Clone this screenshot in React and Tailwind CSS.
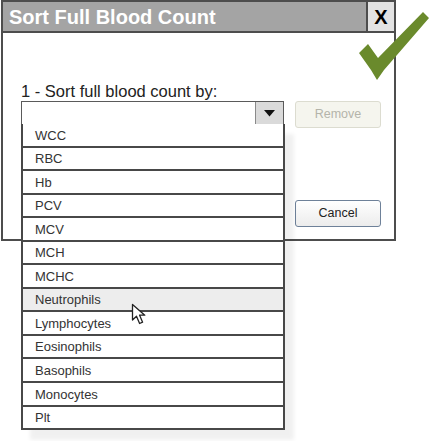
const ITEMS = ['WCC', 'RBC', 'Hb', 'PCV', 'MCV', 'MCH', 'MCHC', 'Neutrophils', 'Lymphocytes', 'Eosinophils', 'Basophils', 'Monocytes', 'Plt']

function Check() {
  return (
    <svg className="absolute left-[358px] top-[10px]" width="71" height="72" viewBox="0 0 71 72">
      <path d="M1 43 L10 34 L20 48 L65 2 L71 8 L26 60 L19 70 L13 60 Z" fill="#6a8a2c" />
    </svg>
  )
}

function Cursor() {
  return (
    <svg className="absolute left-[131px] top-[303px]" width="16" height="24" viewBox="0 0 16 24">
      <path d="M1.5 1.5 L1.5 17 L5.5 13.2 L8.6 20.5 L11.6 19.2 L8.6 12.2 L13.8 12.2 Z" fill="#fff" stroke="#222" strokeWidth="1.3" strokeLinejoin="round" />
    </svg>
  )
}

export default function App() {
  return (
    <div className="relative w-[429px] h-[441px] bg-white overflow-hidden" style={{ fontFamily: '"Liberation Sans", Arial, sans-serif' }}>
      <div className="ml-[1px] w-[395px] h-[241px] border-2 border-[#4d4d4d] flex flex-col">
        <div className="h-[31px] flex bg-[#a4a4a4] border-b-2 border-[#4d4d4d]">
          <div className="flex-1 pl-[6px] flex items-center text-white font-bold text-[20px]">Sort Full Blood Count</div>
          <div className="w-[28px] flex items-center justify-center bg-[#e3e3e3] border-l-2 border-[#4d4d4d] font-bold text-[20px] text-black">X</div>
        </div>
        <div className="flex-1 pl-[18px] pt-[49px]">
          <div className="text-[16.5px] text-[#222] leading-[19px]">1 - Sort full blood count by:</div>
          <div className="flex items-start gap-[11px]">
            <div className="w-[263px] h-[24px] border border-[#5a5a5a] flex bg-white">
              <div className="flex-1" />
              <div className="w-[28px] bg-[#dadada] border-l border-[#8a8a8a] flex items-center justify-center">
                <svg width="11" height="7" viewBox="0 0 11 7"><path d="M0 0 H11 L5.5 6.5 Z" fill="#111" /></svg>
              </div>
            </div>
            <div className="w-[86px] h-[27px] rounded-[3px] border border-[#dcdcd0] bg-[#f5f5ee] flex items-center justify-center text-[12.5px] text-[#b4b4aa]">Remove</div>
          </div>
          <div className="flex justify-end pr-[13px] mt-[72px]">
            <div className="w-[86px] h-[27px] rounded-[3px] border border-[#6e8199] bg-gradient-to-b from-white to-[#ececec] flex items-center justify-center text-[12.5px] text-[#222]">Cancel</div>
          </div>
        </div>
      </div>

      <div className="absolute left-[21px] top-[124px] w-[264px] bg-white border-x-2 border-[#484848] shadow-[9px_10px_4px_rgba(0,0,0,0.06)]">
        {ITEMS.map((it) => (
          <div key={it} className={`h-[23.55px] border-b-2 border-[#484848] pl-[12px] pt-[1px] flex items-center text-[13px] text-[#333] ${it === 'Neutrophils' ? 'bg-[#ededed]' : ''}`}>{it}</div>
        ))}
      </div>

      <Check />
      <Cursor />
    </div>
  )
}
